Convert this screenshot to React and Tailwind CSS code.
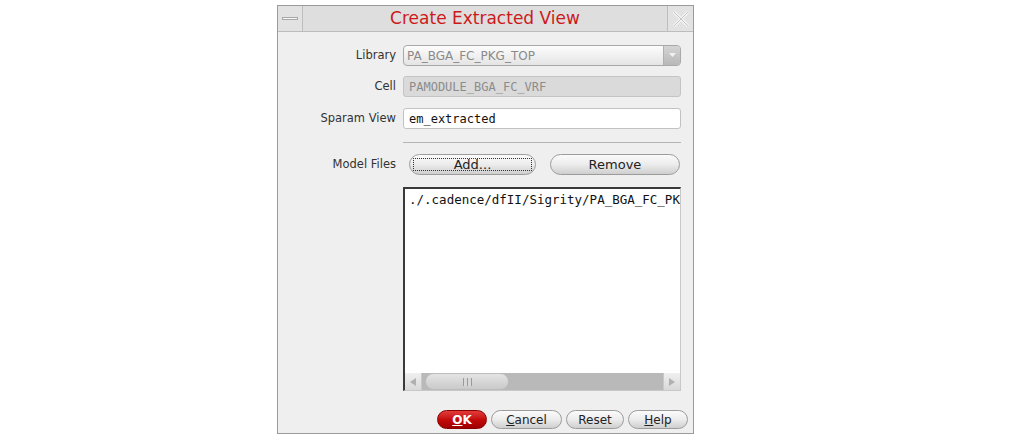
const FONT = { fontFamily: '"DejaVu Sans", "Liberation Sans", sans-serif' };
const MONO = { fontFamily: '"DejaVu Sans Mono", "Liberation Mono", monospace' };

function PillButton({ children, className = '', focus = false }) {
  return (
    <div
      className={`h-full flex items-center justify-center rounded-full border border-[#9c9c9c] bg-gradient-to-b from-[#fbfbfb] via-[#ececec] to-[#cfcfcf] text-[13px] text-[#222] ${className}`}
    >
      {focus ? (
        <span className="px-[3px] border border-dotted border-[#333] w-[calc(100%-6px)] h-[calc(100%-6px)] flex items-center justify-center">
          {children}
        </span>
      ) : (
        children
      )}
    </div>
  );
}

export default function App() {
  return (
    <div className="w-[1013px] h-[440px] bg-white overflow-hidden" style={FONT}>
      <div className="ml-[277px] mt-[5px] w-[417px] h-[429px] border border-[#9a9a9a] bg-[#efefef] flex flex-col">
        {/* title bar */}
        <div className="h-[26px] flex bg-[#e2e2e2] border-b border-[#bcbcbc]">
          <div className="w-[25px] flex items-center justify-center border-r border-[#bdbdbd]">
            <div className="w-[16px] h-[3px] bg-[#f7f7f7] border border-[#a8a8a8]" />
          </div>
          <div className="flex-1 flex items-center justify-center text-[17px] text-[#cc1a1a] border-r border-[#bdbdbd] bg-[#dedede]">
            Create Extracted View
          </div>
          <div className="w-[25px] flex items-center justify-center">
            <svg width="18" height="18" viewBox="0 0 18 18">
              <path d="M2 2 L16 16 M16 2 L2 16" stroke="#f4f4f4" strokeWidth="3" />
              <path d="M2 2 L16 16 M16 2 L2 16" stroke="#c4c4c4" strokeWidth="1" />
            </svg>
          </div>
        </div>

        {/* body */}
        <div className="flex-1 flex flex-col pt-[13px] pr-[12px]">
          <div className="grid grid-cols-[118px_1fr] gap-x-[7px] items-center">
            <div className="text-right text-[11.5px] text-[#333]">Library</div>
            <div className="h-[21px] flex rounded-[4px] border border-[#a9a9a9] bg-gradient-to-b from-[#fdfdfd] to-[#e4e4e4] overflow-hidden">
              <div className="flex-1 flex items-center px-[3px] text-[12px] text-[#8a8a8a]">PA_BGA_FC_PKG_TOP</div>
              <div className="w-[17px] flex items-center justify-center bg-gradient-to-b from-[#d4d4d4] to-[#b8b8b8] border-l border-[#b0b0b0]">
                <svg width="7" height="5" viewBox="0 0 7 5">
                  <path d="M0 0 L7 0 L3.5 4 Z" fill="#f2f2f2" />
                </svg>
              </div>
            </div>

            <div className="text-right text-[11.5px] text-[#333] mt-[10px]">Cell</div>
            <div className="mt-[10px] h-[21px] flex items-center px-[5px] rounded-[3px] border border-[#c4c4c4] bg-[#dadada] text-[12px] text-[#8c8c8c]" style={MONO}>
              PAMODULE_BGA_FC_VRF
            </div>

            <div className="text-right text-[11.5px] text-[#333] mt-[11px]">Sparam View</div>
            <div className="mt-[11px] h-[21px] flex items-center px-[5px] rounded-[3px] border border-[#c2c2c2] bg-white text-[12px] text-[#111]" style={MONO}>
              em_extracted
            </div>

            <div />
            <div className="mt-[13px] h-px bg-[#b5b5b5]" />

            <div className="text-right text-[11.5px] text-[#333] mt-[11px]">Model Files</div>
            <div className="mt-[11px] h-[21px] flex gap-[14px] pl-[6px] pr-px">
              <PillButton className="w-[127px]" focus>Add...</PillButton>
              <PillButton className="flex-1">Remove</PillButton>
            </div>

            <div />
            <div className="mt-[12px] h-[204px] flex flex-col border-t-2 border-l-2 border-[#3a3a3a] border-r border-b border-r-[#c8c8c8] border-b-[#c8c8c8] bg-white">
              <div className="flex-1 pl-[4px] pt-[2px] text-[12.5px] text-[#111] whitespace-nowrap overflow-hidden" style={MONO}>
                ./.cadence/dfII/Sigrity/PA_BGA_FC_PK
              </div>
              <div className="h-[17px] flex bg-[#b9b9b9]">
                <div className="w-[17px] flex items-center justify-center bg-gradient-to-b from-[#f0f0f0] to-[#d8d8d8] border-r border-[#c8c8c8]">
                  <svg width="6" height="8" viewBox="0 0 6 8"><path d="M6 0 L0 4 L6 8 Z" fill="#b0b0b0" /></svg>
                </div>
                <div className="ml-[3px] w-[84px] rounded-full bg-gradient-to-b from-[#e4e4e4] to-[#cacaca] border border-[#bcbcbc] flex items-center justify-center">
                  <div className="w-[9px] h-[8px] border-x border-[#9a9a9a] bg-[#d8d8d8] flex justify-center">
                    <div className="w-px h-full bg-[#9a9a9a]" />
                  </div>
                </div>
                <div className="flex-1" />
                <div className="w-[17px] flex items-center justify-center bg-gradient-to-b from-[#f0f0f0] to-[#d8d8d8] border-l border-[#c8c8c8]">
                  <svg width="6" height="8" viewBox="0 0 6 8"><path d="M0 0 L6 4 L0 8 Z" fill="#b0b0b0" /></svg>
                </div>
              </div>
            </div>
          </div>

          <div className="mt-[19px] h-[19px] flex justify-end gap-[4px] -mr-[7px]">
            <div className="w-[50px] h-full flex items-center justify-center rounded-full border border-[#8a0000] bg-gradient-to-b from-[#e23a3a] via-[#c40a0a] to-[#a00000] text-[12px] font-bold text-white">
              <span className="underline">O</span>K
            </div>
            <PillButton className="w-[71px] !text-[12px]"><span><span className="underline">C</span>ancel</span></PillButton>
            <PillButton className="w-[58px] !text-[12px]">Reset</PillButton>
            <PillButton className="w-[60px] !text-[12px]"><span><span className="underline">H</span>elp</span></PillButton>
          </div>
        </div>
      </div>
    </div>
  );
}
